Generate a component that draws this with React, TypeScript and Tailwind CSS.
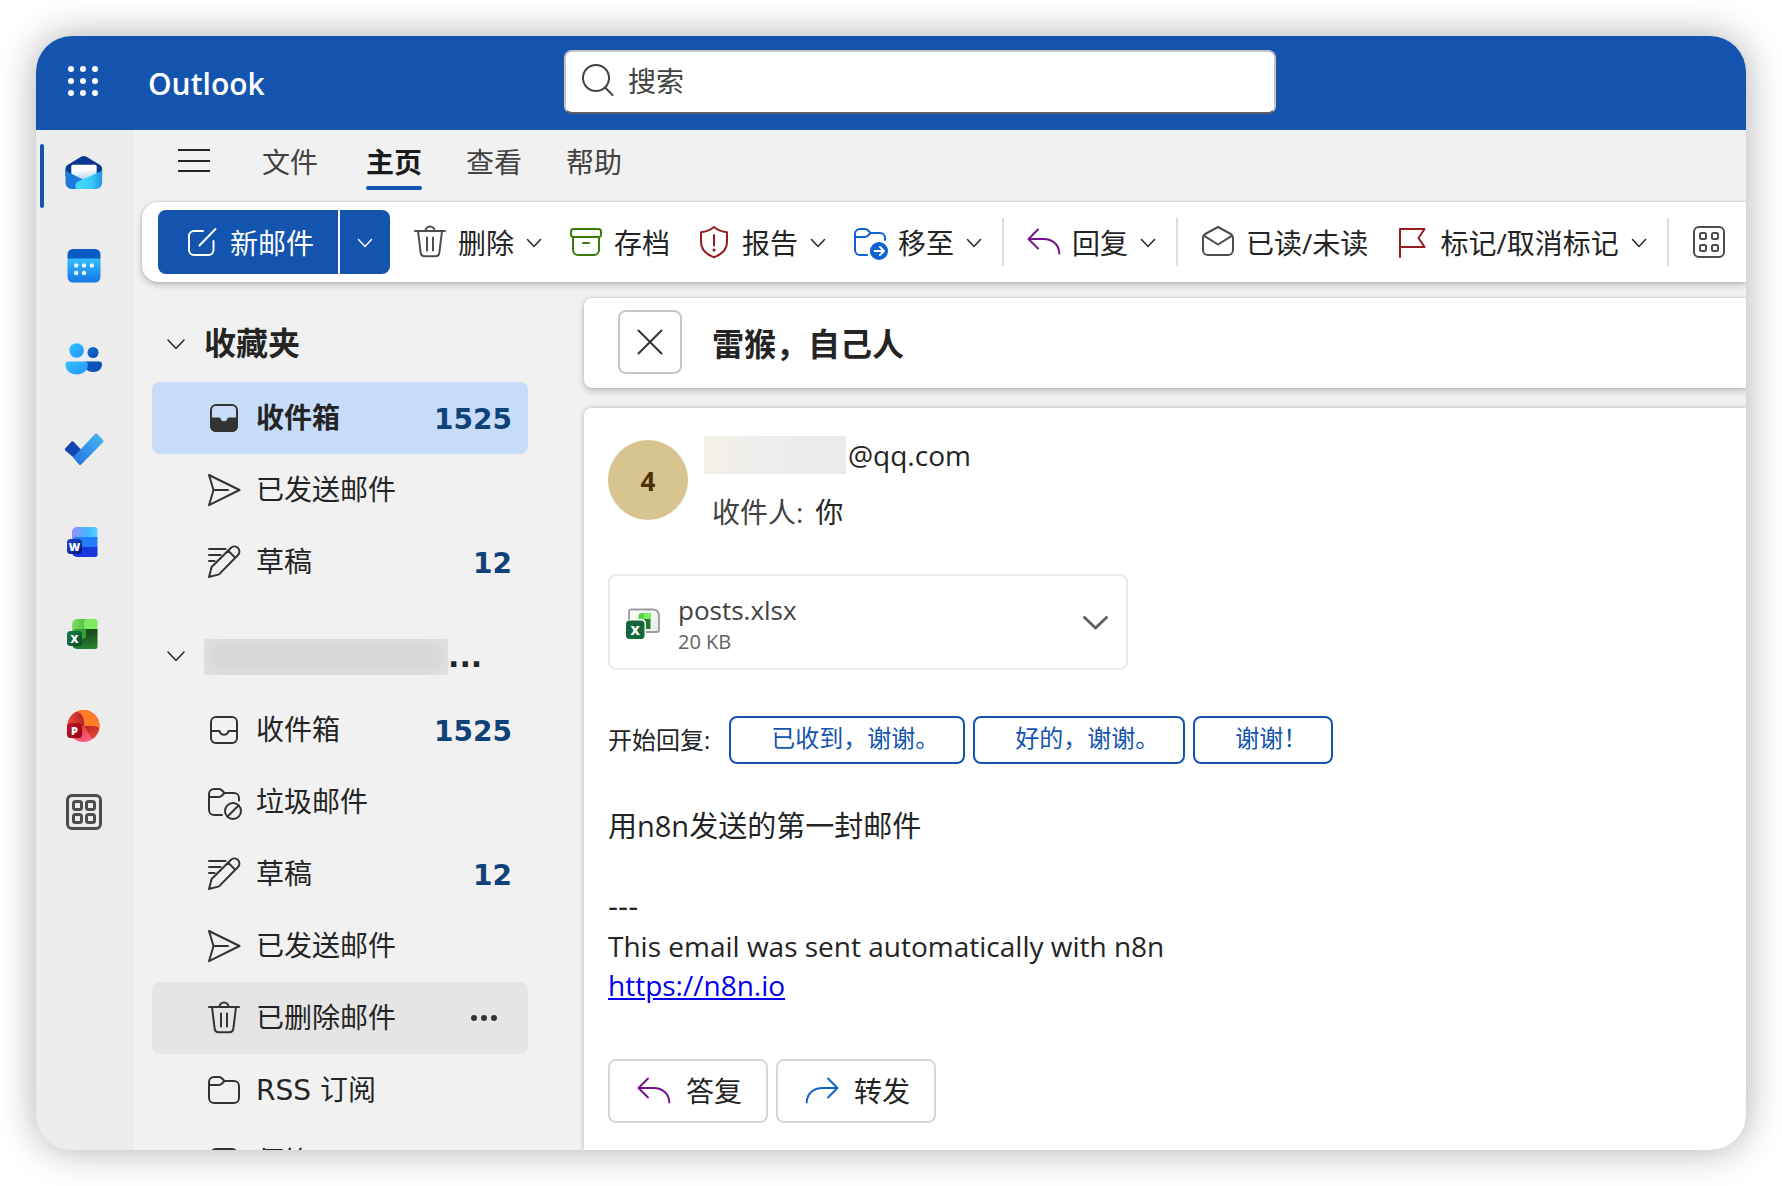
import type { ReactNode } from "react";
import clsx from "clsx";

const fontUi = "font-['Open_Sans','Noto_Sans_CJK_SC',sans-serif]";
const fontNav = "font-['DejaVu_Sans','Noto_Sans_CJK_SC',sans-serif]";

/* ---------- icons ---------- */

function Icon({ children, className }: { children: ReactNode; className?: string }) {
  return (
    <svg
      viewBox="0 0 40 40"
      fill="none"
      stroke="currentColor"
      strokeWidth="2"
      strokeLinecap="round"
      strokeLinejoin="round"
      aria-hidden="true"
      className={clsx("size-10 shrink-0", className)}
    >
      {children}
    </svg>
  );
}

function Chevron({ wide }: { wide?: boolean }) {
  return (
    <svg viewBox="0 0 24 24" fill="none" stroke="currentColor" strokeWidth="1.5" strokeLinecap="round" aria-hidden="true" className="size-6 shrink-0">
      <path d={wide ? "M4 8l8 8.5L20 8" : "M5.5 9.5l6.5 7 6.5-7"} />
    </svg>
  );
}

const TrashIcon = ({ className }: { className?: string }) => (
  <Icon className={className}>
    <path d="M5 9h30M15.5 9a4.5 4.5 0 0 1 9 0M8 9l2.6 21.4a4.2 4.2 0 0 0 4.2 3.8h10.4a4.2 4.2 0 0 0 4.2-3.8L32 9M17 15.5v13M23 15.5v13" />
  </Icon>
);

const ComposeIcon = () => (
  <Icon>
    <path d="M21 9h-9a5 5 0 0 0-5 5v14a5 5 0 0 0 5 5h14.500a5 5 0 0 0 5-5v-9M33.500 7L17.500 23.500" />
  </Icon>
);

const ArchiveIcon = ({ className }: { className?: string }) => (
  <Icon className={className}>
    <rect x="5" y="7" width="30" height="8" rx="2.500" />
    <path d="M7 15v13a5 5 0 0 0 5 5h16a5 5 0 0 0 5-5V15M17 21h6" />
  </Icon>
);

const ShieldIcon = ({ className }: { className?: string }) => (
  <Icon className={className}>
    <path d="M20 5c3.600 3 8 4.800 13 5.200V20c0 7.200-4.800 12.300-13 15.200C11.800 32.300 7 27.200 7 20v-9.800C12 9.800 16.400 8 20 5zM20 13v10.500" />
    <circle cx="20" cy="28" r="1.600" fill="currentColor" stroke="none" />
  </Icon>
);

const MoveIcon = ({ className }: { className?: string }) => (
  <Icon className={className}>
    <path d="M17 33h-7a5 5 0 0 1-5-5V12a5 5 0 0 1 5-5h5a4 4 0 0 1 2.800 1.200L20.500 11H30a5 5 0 0 1 5 5v2M5 15h10a4 4 0 0 0 2.800-1.200L20.500 11" />
    <circle cx="29" cy="29" r="9" fill="currentColor" stroke="none" />
    <path d="M24.500 29h9M30 25l4 4-4 4" stroke="white" />
  </Icon>
);

const ReplyIcon = ({ className }: { className?: string }) => (
  <Icon className={className}>
    <path d="M14 7.500L4.500 17l9.500 9.500M5 17h14.500C29 17 35 23 35.300 31.500" />
  </Icon>
);

const ForwardIcon = ({ className }: { className?: string }) => (
  <Icon className={className}>
    <path d="M26 7.500l9.500 9.500-9.500 9.500M35 17H20.500C11 17 5 23 4.700 31.500" />
  </Icon>
);

const MailReadIcon = ({ className }: { className?: string }) => (
  <Icon className={className}>
    <path d="M20 5l12.800 7A4.200 4.200 0 0 1 35 15.700V28a5 5 0 0 1-5 5H10a5 5 0 0 1-5-5V15.700A4.200 4.200 0 0 1 7.200 12zM6.200 13.800L20 22.500l13.800-8.700" />
  </Icon>
);

const FlagIcon = ({ className }: { className?: string }) => (
  <Icon className={className}>
    <path d="M8 35V7h24.500L26.500 16l6 9H8" />
  </Icon>
);

const GridIcon = ({ className }: { className?: string }) => (
  <Icon className={className}>
    <rect x="5" y="5" width="30" height="30" rx="5" />
    <rect x="11" y="11" width="6" height="6" rx="1.500" />
    <rect x="23" y="11" width="6" height="6" rx="1.500" />
    <rect x="11" y="23" width="6" height="6" rx="1.500" />
    <rect x="23" y="23" width="6" height="6" rx="1.500" />
  </Icon>
);

const InboxIcon = () => (
  <Icon>
    <rect x="7" y="7" width="26" height="26" rx="5" />
    <path d="M7 21h8.500a4.600 4.600 0 0 0 9 0H33" />
  </Icon>
);

const InboxFilledIcon = () => (
  <Icon>
    <path d="M7 20.500h8.500a4.600 4.600 0 0 0 9 0H33V28a5 5 0 0 1-5 5H12a5 5 0 0 1-5-5z" fill="currentColor" />
    <rect x="7" y="7" width="26" height="26" rx="5" />
  </Icon>
);

const SendIcon = () => (
  <Icon>
    <path d="M5 5l30.500 15L5 35.200 9.500 20zM9.500 20H24" />
  </Icon>
);

const DraftIcon = () => (
  <Icon>
    <path d="M5 35l2.600-10L26.800 6a4.900 4.900 0 0 1 7.200 7L15 32.400zM24.300 8.800l6.900 6.900M5 7h16.500M5 13h11.500M5 19h5.500" />
  </Icon>
);

const FolderIcon = () => (
  <Icon>
    <path d="M5 12a5 5 0 0 1 5-5h5a4 4 0 0 1 2.800 1.200L20.500 11H30a5 5 0 0 1 5 5v12a5 5 0 0 1-5 5H10a5 5 0 0 1-5-5zM5 15h10a4 4 0 0 0 2.800-1.200L20.500 11" />
  </Icon>
);

const JunkIcon = () => (
  <Icon>
    <path d="M18 33h-8a5 5 0 0 1-5-5V12a5 5 0 0 1 5-5h5a4 4 0 0 1 2.800 1.200L20.500 11H30a5 5 0 0 1 5 5v2.500M5 15h10a4 4 0 0 0 2.800-1.200L20.500 11" />
    <circle cx="29" cy="29" r="8" />
    <path d="M23.500 34.500l11-11" />
  </Icon>
);

const NoteIcon = () => (
  <Icon>
    <path d="M12 7h16a5 5 0 0 1 5 5v11L23 33H12a5 5 0 0 1-5-5V12a5 5 0 0 1 5-5zM33 23h-6a4 4 0 0 0-4 4v6" />
  </Icon>
);

/* ---------- app rail icons ---------- */

const MailApp = () => (
  <svg viewBox="0 0 40 40" className="size-10">
    <defs>
      <linearGradient id="mailFlap" x1="0" y1="0" x2="1" y2="0">
        <stop offset="0" stopColor="#41dcfb" />
        <stop offset="0.6" stopColor="#38cbf8" />
        <stop offset="1" stopColor="#2293e6" />
      </linearGradient>
      <linearGradient id="mailPaper" x1="0" y1="0" x2="0.2" y2="1">
        <stop offset="0.4" stopColor="#fff" />
        <stop offset="1" stopColor="#b9d3ee" />
      </linearGradient>
    </defs>
    <path d="M.5 13c0-2 .9-3.300 2.400-4.300L16.500.6a5 5 0 0 1 4.600 0l13.600 8.100c1.500 1 2.400 2.300 2.400 4.300v7H.5z" fill="#0b398f" />
    <path d="M6.300 10.500a1.700 1.700 0 0 1 1.700-1.700h22a1.700 1.700 0 0 1 1.700 1.700V24H6.300z" fill="url(#mailPaper)" />
    <path d="M.5 13c.5 1.500 1.500 2.500 3 3.300L22 25.500 14 33H6.500a6 6 0 0 1-6-6z" fill="#1a7cd8" />
    <path d="M37.100 13c-.5 1.500-1.500 2.500-3 3.300L14 25c-3.500 1.600-4.500 4.500-3 8h20.100a6 6 0 0 0 6-6z" fill="url(#mailFlap)" />
  </svg>
);

const CalendarApp = () => (
  <svg viewBox="0 0 40 40" className="size-10">
    <defs>
      <linearGradient id="calBody" x1="0" y1="0" x2="0" y2="1">
        <stop offset="0" stopColor="#37bdfd" />
        <stop offset="1" stopColor="#1577e6" />
      </linearGradient>
    </defs>
    <path d="M2.500 10h33v19a5.500 5.500 0 0 1-5.500 5.500H8A5.500 5.500 0 0 1 2.500 29z" fill="url(#calBody)" />
    <path d="M2.500 10.500v-4A5.500 5.500 0 0 1 8 1h22a5.500 5.500 0 0 1 5.500 5.500v4z" fill="#0a5bc6" />
    <g fill="#e6f7ff">
      <circle cx="11.200" cy="17.500" r="2.200" />
      <circle cx="19" cy="17.500" r="2.200" />
      <circle cx="26.800" cy="17.500" r="2.200" />
      <circle cx="11.200" cy="25" r="2.200" />
      <circle cx="19" cy="25" r="2.200" />
    </g>
  </svg>
);

const PeopleApp = () => (
  <svg viewBox="0 0 40 40" className="size-10">
    <defs>
      <linearGradient id="personBack" x1="0" y1="0" x2="1" y2="1">
        <stop offset="0" stopColor="#0f72d8" />
        <stop offset="1" stopColor="#0a49b0" />
      </linearGradient>
      <linearGradient id="personFront" x1="0" y1="0" x2="1" y2="1">
        <stop offset="0" stopColor="#38c0ff" />
        <stop offset="1" stopColor="#1e96fb" />
      </linearGradient>
    </defs>
    <circle cx="28" cy="12.500" r="5.500" fill="url(#personBack)" />
    <path d="M20 21.500h14a3 3 0 0 1 3 3c0 4.500-3.500 7.500-8.500 7.500-4 0-7-1.500-8.500-4.500z" fill="#0c52b8" />
    <circle cx="11.600" cy="10.500" r="7.300" fill="url(#personFront)" />
    <path d="M4 21.500h15.500a3.300 3.300 0 0 1 3.300 3.300c0 6-4.600 9.700-11 9.700S.5 30.800.5 24.800A3.300 3.300 0 0 1 4 21.500z" fill="url(#personFront)" />
  </svg>
);

const TodoApp = () => (
  <svg viewBox="0 0 40 40" className="size-10">
    <defs>
      <linearGradient id="todo" x1="0" y1="1" x2="1" y2="0">
        <stop offset="0" stopColor="#2172e0" />
        <stop offset="1" stopColor="#4bb7f2" />
      </linearGradient>
    </defs>
    <path d="M.2 16.500l6.200-6.700a1.500 1.500 0 0 1 2.200 0l7.400 7.700-7.300 8L.2 18.500a1.500 1.500 0 0 1 0-2z" fill="#1644b0" />
    <path d="M8 25.500L30 2a1.500 1.500 0 0 1 2.200 0l5.900 6a1.500 1.500 0 0 1 0 2.200L16.200 32.500a1.500 1.500 0 0 1-2.200 0z" fill="url(#todo)" />
  </svg>
);

function Badge({ letter, from, to }: { letter: string; from: string; to: string }) {
  return (
    <>
      <defs>
        <linearGradient id={`badge${letter}`} x1="0" y1="0" x2="1" y2="1">
          <stop offset="0" stopColor={from} />
          <stop offset="1" stopColor={to} />
        </linearGradient>
      </defs>
      <rect x="2" y="15" width="15" height="15" rx="3.500" fill={`url(#badge${letter})`} />
      <text x="9.500" y="26.600" textAnchor="middle" fontFamily="Open Sans" fontWeight="800" fontSize="11" fill="#fff">
        {letter}
      </text>
    </>
  );
}

const WordApp = () => (
  <svg viewBox="0 0 40 40" className="size-10">
    <defs>
      <linearGradient id="wordTop" x1="0" y1="0" x2="1" y2="0">
        <stop offset="0" stopColor="#9a8cf8" />
        <stop offset="0.6" stopColor="#41b8fd" />
        <stop offset="1" stopColor="#57d0ff" />
      </linearGradient>
    </defs>
    <path d="M7 23h25.500v7.500A2.500 2.500 0 0 1 30 33H12a5 5 0 0 1-5-5z" fill="#1735e0" />
    <path d="M7 13h25.500v10H7z" fill="#217dfb" />
    <path d="M7 8a5 5 0 0 1 5-5h18a2.500 2.500 0 0 1 2.500 2.500V13H12a5 5 0 0 0-5 3z" fill="url(#wordTop)" />
    <Badge letter="W" from="#1c4cd2" to="#06136e" />
  </svg>
);

const ExcelApp = () => (
  <svg viewBox="0 0 40 40" className="size-10">
    <defs>
      <linearGradient id="excelBase" x1="0.6" y1="0.2" x2="0.8" y2="1">
        <stop offset="0" stopColor="#174d1b" />
        <stop offset="1" stopColor="#288532" />
      </linearGradient>
      <linearGradient id="excelTop" x1="0" y1="0" x2="1" y2="0">
        <stop offset="0" stopColor="#86e06a" />
        <stop offset="1" stopColor="#45bb3b" />
      </linearGradient>
    </defs>
    <path d="M7 13h25.500v17.500A2.500 2.500 0 0 1 30 33H12a5 5 0 0 1-5-5z" fill="url(#excelBase)" />
    <path d="M7 12h14v8a3 3 0 0 1-3 3H7z" fill="#3a9c35" />
    <path d="M7 8a5 5 0 0 1 5-5h10v10H12a5 5 0 0 0-5 3z" fill="url(#excelTop)" />
    <path d="M19 6a3 3 0 0 1 3-3h8a2.500 2.500 0 0 1 2.500 2.500V13H22a3 3 0 0 1-3-3z" fill="#7ded5f" />
    <Badge letter="X" from="#14804a" to="#0a4a25" />
  </svg>
);

const PowerPointApp = () => (
  <svg viewBox="0 0 40 40" className="size-10">
    <defs>
      <linearGradient id="ppt" x1="0" y1="0" x2="0.5" y2="1">
        <stop offset="0" stopColor="#d13a33" />
        <stop offset="0.6" stopColor="#e63f33" />
        <stop offset="1" stopColor="#fb5f83" />
      </linearGradient>
      <linearGradient id="pptLeft" x1="0" y1="0.6" x2="1" y2="0.4">
        <stop offset="0" stopColor="#ea4b3c" />
        <stop offset="1" stopColor="#b3231f" />
      </linearGradient>
      <linearGradient id="pptRight" x1="0" y1="0" x2="0.4" y2="1">
        <stop offset="0" stopColor="#b52420" />
        <stop offset="1" stopColor="#ea4634" />
      </linearGradient>
    </defs>
    <circle cx="18.500" cy="18" r="16" fill="url(#ppt)" />
    <path d="M12 3.400A16 16 0 0 0 2.500 18h17C19.300 12 18.500 5.500 12 3.400z" fill="url(#pptLeft)" />
    <path d="M12 3.400A16 16 0 0 1 34.300 20.500C32 17.500 27 18.300 19.500 18 19.300 12 18.500 5.500 12 3.400z" fill="#fd7d27" />
    <path d="M19.500 18c7.500.300 12.500-.500 14.800 2.500-.900 4.500-3.300 8.200-7.300 10.800z" fill="url(#pptRight)" />
    <Badge letter="P" from="#c41425" to="#8c0718" />
  </svg>
);

const MoreApps = () => (
  <svg viewBox="0 0 40 40" fill="none" stroke="#4d4d4d" strokeWidth="3" className="size-10">
    <rect x="2.500" y="3.500" width="33" height="33" rx="4.500" />
    <rect x="8.500" y="9.500" width="8" height="8" rx="2" />
    <rect x="21.500" y="9.500" width="8" height="8" rx="2" />
    <rect x="8.500" y="22.500" width="8" height="8" rx="2" />
    <rect x="21.500" y="22.500" width="8" height="8" rx="2" />
  </svg>
);

const FileIcon = () => (
  <svg viewBox="0 0 36 32" className="mt-1 h-8 w-9 shrink-0">
    <defs>
      <linearGradient id="filePage" x1="0" y1="0" x2="1" y2="1">
        <stop offset="0" stopColor="#fff" />
        <stop offset="1" stopColor="#e8e8e8" />
      </linearGradient>
    </defs>
    <path d="M5 1.500h22a6 6 0 0 1 6 6V22a2 2 0 0 1-2 2H5a2 2 0 0 1-2-2V3.500a2 2 0 0 1 2-2z" fill="url(#filePage)" stroke="#9a9a9a" strokeWidth="1.800" />
    <path d="M18 9h6.500v12H18z" fill="#1f7a2b" />
    <path d="M12.500 8a3 3 0 0 1 3-3H24a.8.8 0 0 1 .8.800V11H12.500z" fill="#58d544" />
    <path d="M18 5h6a.8.8 0 0 1 .8.800V11H18z" fill="#7dee5e" />
    <rect x="0" y="11.500" width="20" height="20" rx="4" fill="#fff" />
    <rect x="0" y="12.500" width="18.500" height="18.500" rx="3.500" fill="#14693a" />
    <text x="9.200" y="26.500" textAnchor="middle" fontFamily="Open Sans" fontWeight="800" fontSize="13" fill="#fff">
      X
    </text>
  </svg>
);

/* ---------- data ---------- */

const apps = [
  { label: "邮件", icon: <MailApp />, active: true },
  { label: "日历", icon: <CalendarApp /> },
  { label: "人员", icon: <PeopleApp /> },
  { label: "待办", icon: <TodoApp /> },
  { label: "Word", icon: <WordApp /> },
  { label: "Excel", icon: <ExcelApp /> },
  { label: "PowerPoint", icon: <PowerPointApp /> },
];

const tabs = ["文件", "主页", "查看", "帮助"];

type Folder = { label: string; icon: ReactNode; count?: number; selected?: boolean; hovered?: boolean };

const favorites: Folder[] = [
  { label: "收件箱", icon: <InboxFilledIcon />, count: 1525, selected: true },
  { label: "已发送邮件", icon: <SendIcon /> },
  { label: "草稿", icon: <DraftIcon />, count: 12 },
];

const folders: Folder[] = [
  { label: "收件箱", icon: <InboxIcon />, count: 1525 },
  { label: "垃圾邮件", icon: <JunkIcon /> },
  { label: "草稿", icon: <DraftIcon />, count: 12 },
  { label: "已发送邮件", icon: <SendIcon /> },
  { label: "已删除邮件", icon: <TrashIcon />, hovered: true },
  { label: "RSS 订阅", icon: <FolderIcon /> },
  { label: "便笺", icon: <NoteIcon /> },
];

const quickReplies = ["已收到，谢谢。", "好的，谢谢。", "谢谢！"];

/* ---------- parts ---------- */

function Header() {
  return (
    <header className="flex h-[94px] shrink-0 items-center bg-[#1254ae]">
      <button aria-label="应用启动器" className="ml-8 shrink-0">
        <svg viewBox="0 0 30 30" fill="white" className="-mt-1 size-[30px]">
          {[3, 15, 27].map((y) => [3, 15, 27].map((x) => <circle key={`${x}-${y}`} cx={x} cy={y} r="3" />))}
        </svg>
      </button>
      <div className="ml-[50px] w-[416px] shrink-0 pt-0.5 text-[30px] leading-10 font-semibold text-white">Outlook</div>
      <label className="-mt-0.5 flex h-16 w-[712px] items-center gap-[10px] rounded-lg border-2 border-[#c7c7c7] border-b-[#616161] bg-white pl-3 text-[#424242]">
        <Icon className="-mt-1">
          <circle cx="18" cy="18" r="13" />
          <path d="M27 27.500l7.500 7.500" />
        </Icon>
        <input
          type="search"
          aria-label="搜索"
          placeholder="搜索"
          className="min-w-0 flex-1 pb-0.5 text-[28px] outline-none placeholder:text-[#424242]"
        />
      </label>
    </header>
  );
}

function Rail() {
  return (
    <nav className="flex w-[98px] shrink-0 flex-col bg-[#ececec]">
      {apps.map((app) => (
        <button key={app.label} aria-label={app.label} className="relative flex h-[92px] shrink-0 items-center justify-center">
          {app.active && <span className="absolute left-1 h-16 w-1 rounded-full bg-[#1254ae]" />}
          {app.icon}
        </button>
      ))}
      <button aria-label="更多应用" className="flex h-[76px] shrink-0 items-center justify-center">
        <MoreApps />
      </button>
    </nav>
  );
}

function Tabs() {
  return (
    <div className="flex h-16 shrink-0 items-center pl-11">
      <button aria-label="菜单" className="mr-[52px]">
        <svg viewBox="0 0 32 24" stroke="#242424" strokeWidth="2" className="-mt-1 h-6 w-8">
          <path d="M0 2h32M0 13h32M0 23h32" />
        </svg>
      </button>
      <div className="flex gap-11">
        {tabs.map((tab) => (
          <button
            key={tab}
            className={clsx(
              "relative text-[28px] leading-10 first:mr-1",
              tab === "主页"
                ? "font-bold text-[#1a1a1a] after:absolute after:inset-x-0 after:top-11 after:h-1 after:rounded-full after:bg-[#1254ae]"
                : "text-[#424242]"
            )}
          >
            {tab}
          </button>
        ))}
      </div>
    </div>
  );
}

function RibbonButton({ icon, label, menu }: { icon: ReactNode; label: string; menu?: boolean }) {
  return (
    <button className={clsx("flex h-16 shrink-0 items-center gap-2 pl-3", menu ? "pr-2" : "pr-3")}>
      {icon}
      <span className="pt-0.5">{label}</span>
      {menu && <Chevron />}
    </button>
  );
}

const Divider = () => <span className="mx-2 h-12 w-0.5 shrink-0 bg-[#dedede]" />;

function Ribbon() {
  return (
    <div className="mt-2 ml-2 flex h-20 shrink-0 items-center rounded-l-2xl bg-white pl-4 text-[28px] whitespace-nowrap text-[#242424] shadow-[0_0_3px_rgba(0,0,0,0.18),0_3px_7px_rgba(0,0,0,0.2)]">
      <div className="mr-2 flex gap-0.5 text-white">
        <button className="flex h-16 items-center gap-2 rounded-l-lg bg-[#1254ae] px-6">
          <ComposeIcon />
          <span className="pt-0.5">新邮件</span>
        </button>
        <button aria-label="更多新建选项" className="flex h-16 w-[50px] items-center justify-center rounded-r-lg bg-[#1254ae]">
          <Chevron />
        </button>
      </div>
      <RibbonButton icon={<TrashIcon className="text-[#4d4d4d]" />} label="删除" menu />
      <RibbonButton icon={<ArchiveIcon className="text-[#3b7a0e]" />} label="存档" />
      <RibbonButton icon={<ShieldIcon className="text-[#961b22]" />} label="报告" menu />
      <RibbonButton icon={<MoveIcon className="text-[#0f63d0]" />} label="移至" menu />
      <Divider />
      <RibbonButton icon={<ReplyIcon className="text-[#77118b]" />} label="回复" menu />
      <Divider />
      <RibbonButton icon={<MailReadIcon className="text-[#4d4d4d]" />} label="已读/未读" />
      <RibbonButton icon={<FlagIcon className="text-[#961b22]" />} label="标记/取消标记" menu />
      <Divider />
      <button aria-label="更多" className="shrink-0 px-3">
        <GridIcon className="text-[#4d4d4d]" />
      </button>
    </div>
  );
}

function FolderRow({ folder }: { folder: Folder }) {
  return (
    <a
      href="#"
      className={clsx(
        "flex h-[72px] shrink-0 items-center gap-3 rounded-lg pr-4 pl-[52px] text-[28px] text-[#242424]",
        folder.selected && "bg-[#c6dcf9] font-bold",
        folder.hovered && "bg-[#e5e5e5]"
      )}
    >
      <span className="text-[#333]">{folder.icon}</span>
      <span className="flex-1 pt-0.5">{folder.label}</span>
      {folder.count && <span className="pt-1 font-bold text-[#0f4279]">{folder.count}</span>}
      {folder.hovered && (
        <svg viewBox="0 0 28 8" fill="#333" className="mr-3.5 h-2 w-7">
          <circle cx="4" cy="4" r="3" />
          <circle cx="14" cy="4" r="3" />
          <circle cx="24" cy="4" r="3" />
        </svg>
      )}
    </a>
  );
}

function FolderPane() {
  return (
    <nav className={clsx("flex w-[450px] shrink-0 flex-col overflow-hidden pt-6 pr-14 pl-[18px]", fontNav)}>
      <button className="flex h-[76px] shrink-0 items-center gap-4 pl-3 text-[32px] font-bold text-[#242424]">
        <Chevron wide />
        收藏夹
      </button>
      {favorites.map((f) => (
        <FolderRow key={f.label} folder={f} />
      ))}
      <button aria-label="账户" className="mt-5 flex h-[76px] shrink-0 items-center pl-3 text-[30px] font-bold text-[#242424]">
        <Chevron wide />
        <span className="mt-0.5 ml-4 h-9 w-[244px] bg-[#d4d4d4] shadow-[inset_0_0_24px_#e6e6e6]" />
        <span>...</span>
      </button>
      {folders.map((f) => (
        <FolderRow key={f.label} folder={f} />
      ))}
    </nav>
  );
}

function Message() {
  return (
    <main className="flex min-w-0 flex-1 flex-col gap-5 pt-4">
      <div className="flex h-[90px] shrink-0 items-start rounded-l-lg bg-white pt-3 pl-[34px] shadow-[0_0_3px_rgba(0,0,0,0.18),0_3px_7px_rgba(0,0,0,0.2)]">
        <button aria-label="关闭" className="flex size-16 items-center justify-center rounded-lg border-2 border-[#c7c7c7] text-[#333]">
          <Icon>
            <path d="M8.500 8.500l23 23M31.500 8.500l-23 23" />
          </Icon>
        </button>
        <h1 className="ml-[30px] text-[32px] leading-[68px] font-bold text-[#242424]">雷猴，自己人</h1>
      </div>

      <article className="flex-1 rounded-tl-lg bg-white px-6 pt-7 text-[28px] text-[#242424] shadow-[0_0_5px_rgba(0,0,0,0.25)]">
        <div className="flex gap-4">
          <div className="mt-1 flex size-20 items-center justify-center rounded-full bg-[#d8c491] pt-0.5 text-[26px] font-bold text-[#4b3205]">
            4
          </div>
          <div>
            <div className="flex h-[38px] items-center gap-0.5">
              <span className="h-[38px] w-[142px] bg-linear-to-r from-[#f3f0e6] via-[#ededed] to-[#ebebeb]" />
              <span>@qq.com</span>
            </div>
            <div className="mt-[18px] pl-2 leading-10">
              <span className="text-[#424242]">收件人:</span>
              <span className="ml-3">你</span>
            </div>
          </div>
        </div>

        <div className="mt-[42px] flex h-24 w-[520px] items-center rounded-lg border-2 border-[#ebebeb] pr-4 pl-4">
          <FileIcon />
          <div className="ml-4 flex-1 pt-1">
            <div className="text-[26px] leading-9 text-[#424242]">posts.xlsx</div>
            <div className="text-[20px] leading-7 text-[#616161]">20 KB</div>
          </div>
          <button aria-label="附件选项" className="text-[#616161]">
            <svg viewBox="0 0 28 28" fill="none" stroke="currentColor" strokeWidth="3" strokeLinecap="round" strokeLinejoin="round" className="size-7">
              <path d="M2.500 9.500l11 10.500 11-10.500" />
            </svg>
          </button>
        </div>

        <div className="mt-[46px] flex items-center gap-2 text-[24px]">
          <span className="mr-[11px]">开始回复:</span>
          {quickReplies.map((text) => (
            <button key={text} className="h-12 rounded-lg border-2 border-[#1254ae] pr-6 pb-1 pl-10 whitespace-nowrap text-[#1254ae]">
              {text}
            </button>
          ))}
        </div>

        <p className="mt-[42px] text-[29px] leading-[39px]">用n8n发送的第一封邮件</p>
        <p className="mt-[42px] leading-[39px]">
          <span className={fontNav}>---</span>
          <br />
          This email was sent automatically with n8n
          <br />
          <a href="https://n8n.io" className="text-[#0000ee] underline">
            https://n8n.io
          </a>
        </p>

        <div className="mt-[54px] flex gap-2">
          <button className="flex h-16 w-40 items-center justify-center gap-3 rounded-lg border-2 border-[#d6d6d6]">
            <ReplyIcon className="text-[#77118b]" />
            答复
          </button>
          <button className="flex h-16 w-40 items-center justify-center gap-3 rounded-lg border-2 border-[#d6d6d6]">
            <ForwardIcon className="text-[#0f63d0]" />
            转发
          </button>
        </div>
      </article>
    </main>
  );
}

export default function App() {
  return (
    <div lang="zh-CN" className={clsx("h-screen bg-white p-9", fontUi)}>
      <div className="flex h-full flex-col overflow-hidden rounded-[36px] bg-[#f1f1f1] shadow-[0_0_38px_rgba(0,0,0,0.32)]">
        <Header />
        <div className="flex min-h-0 flex-1">
          <Rail />
          <div className="flex min-w-0 flex-1 flex-col overflow-hidden">
            <Tabs />
            <Ribbon />
            <div className="flex min-h-0 flex-1">
              <FolderPane />
              <Message />
            </div>
          </div>
        </div>
      </div>
    </div>
  );
}
